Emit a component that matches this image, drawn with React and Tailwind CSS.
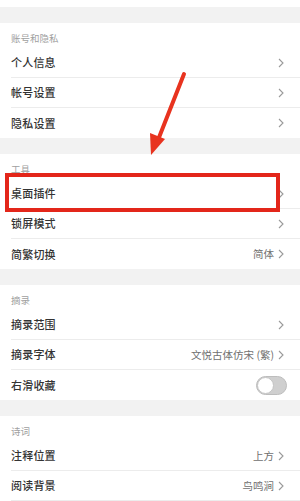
import React from 'react';

const Chevron = () => (
    <svg className="w-[6px] h-[10px] shrink-0" viewBox="0 0 6 10" fill="none">
        <polyline points="1,1 5,5 1,9" stroke="#9a9a9a" strokeWidth="1.1" strokeLinejoin="miter" />
    </svg>
);

const Toggle = () => (
    <div className="relative w-[31px] h-[19px] rounded-full bg-[#cfcfcf] border border-[#bdbdbd]">
        <div className="absolute left-0 top-0 w-[17px] h-[17px] rounded-full bg-white border border-[#c4c4c4]" />
    </div>
);

const sections = [
    {
        title: '账号和隐私',
        rows: [{ label: '个人信息' }, { label: '帐号设置' }, { label: '隐私设置' }],
    },
    {
        title: '工具',
        rows: [{ label: '桌面插件' }, { label: '锁屏模式' }, { label: '简繁切换', value: '简体' }],
    },
    {
        title: '摘录',
        rows: [{ label: '摘录范围' }, { label: '摘录字体', value: '文悦古体仿宋 (繁)' }, { label: '右滑收藏', toggle: true }],
    },
    {
        title: '诗词',
        rows: [{ label: '注释位置', value: '上方' }, { label: '阅读背景', value: '鸟鸣涧' }],
        lastDivider: true,
    },
];

const Row = ({ row, divider }) => (
    <div className="h-[30px] flex flex-col">
        <div className="flex-1 flex items-center pl-[11px] pr-[16px]">
            <span className="text-[11px] tracking-[0.2px] font-medium text-[#333]">{row.label}</span>
            <div className="flex-1" />
            {row.value && <span className="text-[10.5px] text-[#707070] mr-[4px]">{row.value}</span>}
            {row.toggle ? <div className="-mr-[3px]"><Toggle /></div> : <Chevron />}
        </div>
        {divider && <div className="ml-[11px] h-px bg-[#ececec]" />}
    </div>
);

export default function App() {
    return (
        <div
            className="relative w-[300px] h-[501px] overflow-hidden bg-[#f2f2f2]"
            style={{ fontFamily: '"Noto Sans CJK SC", "Noto Sans", sans-serif' }}
        >
            <div className="h-[7px] bg-white" />
            {sections.map((s, i) => (
                <div key={i} className="mt-[16px] bg-white">
                    <div className="h-[25px] flex items-end pl-[11px] pb-[5px]">
                        <span className="text-[9.5px] text-[#a0a0a0] leading-none">{s.title}</span>
                    </div>
                    {s.rows.map((r, j) => (
                        <Row key={j} row={r} divider={j < s.rows.length - 1 || s.lastDivider} />
                    ))}
                </div>
            ))}

            {/* annotation box */}
            <div className="absolute left-[5px] top-[173px] w-[275px] h-[39px] border-[4px] border-[#e3261a]" />

            {/* annotation arrow */}
            <svg className="absolute left-0 top-0 w-[300px] h-[501px] pointer-events-none" viewBox="0 0 300 501">
                <line x1="184" y1="74" x2="158" y2="140" stroke="#e8331f" strokeWidth="4" strokeLinecap="round" />
                <polygon points="151,155 150,133 165,139" fill="#e8331f" />
            </svg>
        </div>
    );
}
